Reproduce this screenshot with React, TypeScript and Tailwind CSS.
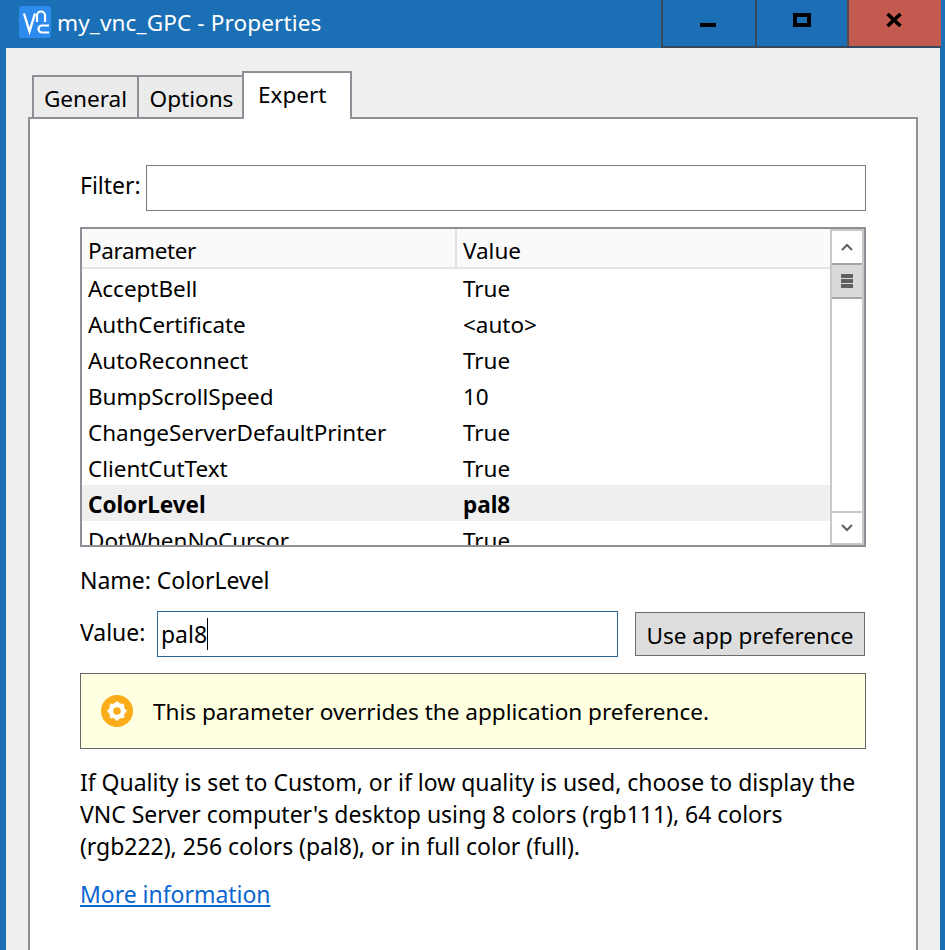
const rows = [
  ["AcceptBell", "True"],
  ["AuthCertificate", "<auto>"],
  ["AutoReconnect", "True"],
  ["BumpScrollSpeed", "10"],
  ["ChangeServerDefaultPrinter", "True"],
  ["ClientCutText", "True"],
  ["ColorLevel", "pal8"],
  ["DotWhenNoCursor", "True"],
];

function VncLogo() {
  return (
    <svg width="32" height="32" viewBox="0 0 32 32" className="shrink-0">
      <rect width="32" height="32" rx="3" fill="#2e8bee" />
      <path d="M5 7.500l5.500 18 5.500-18" fill="none" stroke="#fff" strokeWidth="2.400" />
      <path d="M18 16V9.500a4 4 0 0 1 8 0V16" fill="none" stroke="#fff" strokeWidth="2.200" />
      <path d="M30 19.500h-7a3.500 3.500 0 0 0 0 7h7" fill="none" stroke="#fff" strokeWidth="2.200" />
    </svg>
  );
}

function ScrollBar() {
  return (
    <div className="flex w-[34px] shrink-0 flex-col border-x-2 border-[#c8c8c8]">
      <div className="flex h-[34px] items-center justify-center border-t-2 border-[#c8c8c8]">
        <svg width="12" height="8" viewBox="0 0 12 8">
          <path d="M1 7l5-5 5 5" fill="none" stroke="#606060" strokeWidth="2" />
        </svg>
      </div>
      <div className="flex h-[36px] flex-col items-center justify-center gap-[1px] border-y-2 border-[#a6a6a6] bg-[#dadada]">
        <div className="h-[4px] w-[12px] bg-[#606060]" />
        <div className="h-[4px] w-[12px] bg-[#606060]" />
        <div className="h-[4px] w-[12px] bg-[#606060]" />
      </div>
      <div className="flex-1" />
      <div className="flex h-[34px] items-center justify-center border-y-2 border-[#c8c8c8]">
        <svg width="12" height="8" viewBox="0 0 12 8">
          <path d="M1 1l5 5 5-5" fill="none" stroke="#606060" strokeWidth="2" />
        </svg>
      </div>
    </div>
  );
}

export default function App() {
  return (
    <div className="flex h-[950px] w-[945px] flex-col overflow-hidden bg-[#1a6fb5] text-[23px] leading-[32px] tracking-[-0.03px] text-black [font-family:'Noto_Sans',sans-serif]">
      {/* title bar */}
      <div className="flex h-[48px] shrink-0 items-start">
        <div className="ml-[19px] flex flex-1 items-center gap-[6px] pt-[4px] text-[22.6px] tracking-[0.1px] text-white">
          <VncLogo />
          <span className="pt-[3px]">my_vnc_GPC - Properties</span>
        </div>
        <div className="mr-[4px] flex h-[48px] border-b-2 border-[#34495e]">
          <div className="flex w-[94px] items-center justify-center border-l-2 border-[#34495e]">
            <div className="mr-[3px] mt-[4px] h-[4px] w-[16px] bg-black" />
          </div>
          <div className="flex w-[92px] items-center justify-center border-l-2 border-[#34495e]">
            <div className="mb-[6px] h-[14px] w-[18px] border-[4px] border-black" />
          </div>
          <div className="flex w-[94px] items-center justify-center border-l-2 border-[#5a4a50] bg-[#c25a50]">
            <svg width="16" height="14" viewBox="0 0 16 14" className="mb-[6px] mr-[3px]">
              <path d="M1.500 1l13 12M14.500 1l-13 12" stroke="#000" strokeWidth="3.600" />
            </svg>
          </div>
        </div>
      </div>

      {/* window body */}
      <div className="ml-[6px] mr-[5px] flex flex-1 flex-col bg-[#efefef] pl-[22px] pr-[22px] pt-[23px]">
        <div className="relative z-10 flex h-[46px] shrink-0 items-end pl-[4px] text-[22.6px]">
          <div className="flex h-[42px] w-[107px] items-center justify-center border-2 border-b-0 border-[#8f8f98] bg-[#ebebeb] pt-[4px]">General</div>
          <div className="-ml-[2px] flex h-[42px] w-[107px] items-center justify-center border-2 border-b-0 border-r-0 border-[#8f8f98] bg-[#ebebeb] pt-[4px]">Options</div>
          <div className="-mb-[2px] -ml-[2px] h-[48px] w-[110px] border-2 border-b-0 border-[#8f8f98] bg-white pl-[14px] pt-[6px]">Expert</div>
        </div>
        <div className="flex-1 border-2 border-[#8f8f98] bg-white px-[50px] pb-[60px] pt-[46px]">
          <div className="flex items-center">
            <span className="w-[66px] pb-[7px]">Filter:</span>
            <div className="h-[46px] flex-1 border border-[#7a7a7a]" />
          </div>

          <div className="mt-[16px] flex h-[320px] border-2 border-[#8f8f98] text-[22.5px]">
            <div className="min-w-0 flex-1 overflow-hidden">
              <div className="flex h-[40px] border-b-2 border-[#e4e4e4] bg-[#fafafa]">
                <div className="w-[375px] border-r-2 border-[#e4e4e4] pl-[6px] pt-[6px] tracking-[-0.4px]">Parameter</div>
                <div className="pl-[6px] pt-[6px]">Value</div>
              </div>
              {rows.map(([name, value]) => (
                <div key={name} className={name === "ColorLevel" ? "flex h-[36px] items-center bg-[#efefef] pt-[4px] font-bold" : "flex h-[36px] items-center pt-[4px]"}>
                  <div className="w-[375px] pl-[6px]">{name}</div>
                  <div className="pl-[6px]">{value}</div>
                </div>
              ))}
            </div>
            <ScrollBar />
          </div>

          <div className="mt-[17px]">Name: ColorLevel</div>

          <div className="mt-[15px] flex items-center">
            <span className="w-[77px] pb-[4px]">Value:</span>
            <div className="flex h-[46px] w-[461px] items-center border border-[#2d6595] pl-[3px]">
              <span>pal8</span>
              <span className="h-[32px] w-px bg-black" />
            </div>
            <button className="ml-[17px] h-[44px] w-[230px] border border-[#6e6e6e] bg-[#dddddd] pt-[3px] text-[22.6px]">Use app preference</button>
          </div>

          <div className="mt-[16px] flex h-[76px] items-center gap-[20px] border border-[#666666] bg-[#ffffe1] pl-[20px] text-[22.6px]">
            <svg width="32" height="32" viewBox="0 0 32 32" className="shrink-0">
              <circle cx="16" cy="16" r="16" fill="#fbac18" />
              <circle cx="16" cy="16" r="6" fill="none" stroke="#fff" strokeWidth="4.400" />
              <path d="M16 6.500v4M16 21.500v4M6.500 16h4M21.500 16h4M9.300 9.300l2.800 2.800M19.900 19.900l2.800 2.800M22.700 9.300l-2.800 2.800M12.100 19.900l-2.800 2.800" stroke="#fff" strokeWidth="3.200" />
            </svg>
            <span className="pt-[2px]">This parameter overrides the application preference.</span>
          </div>

          <p className="mt-[17px]">
            If Quality is set to Custom, or if low quality is used, choose to display the<br />
            VNC Server computer's desktop using 8 colors (rgb111), 64 colors<br />
            (rgb222), 256 colors (pal8), or in full color (full).
          </p>

          <a className="mt-[16px] block text-[#0b66d0] underline">More information</a>
        </div>
      </div>
    </div>
  );
}
